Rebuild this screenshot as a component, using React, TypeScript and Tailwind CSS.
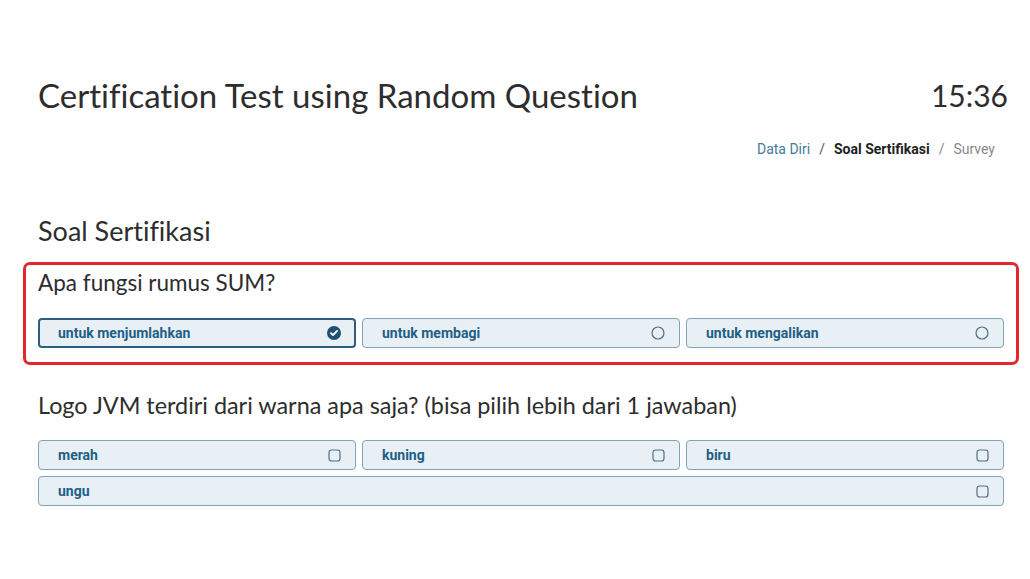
import React from 'react'

type Choice = { label: string; selected?: boolean; full?: boolean }

const q1: Choice[] = [
  { label: 'untuk menjumlahkan', selected: true },
  { label: 'untuk membagi' },
  { label: 'untuk mengalikan' },
]

const q2: Choice[] = [
  { label: 'merah' },
  { label: 'kuning' },
  { label: 'biru' },
  { label: 'ungu', full: true },
]

function RadioIcon({ selected }: { selected?: boolean }) {
  if (selected) {
    return (
      <svg width="14" height="14" viewBox="0 0 14 14">
        <circle cx="7" cy="7" r="7" fill="#1f4f73" />
        <path d="M4 7.2l2 2 4-4.2" fill="none" stroke="#fff" strokeWidth="1.9" strokeLinecap="round" strokeLinejoin="round" />
      </svg>
    )
  }
  return (
    <svg width="14" height="14" viewBox="0 0 14 14">
      <circle cx="7" cy="7" r="6" fill="none" stroke="#4d6f86" strokeWidth="1.2" />
    </svg>
  )
}

function CheckIcon() {
  return (
    <svg width="13" height="13" viewBox="0 0 13 13">
      <rect x="1" y="1" width="11" height="11" rx="2.5" fill="none" stroke="#4d6f86" strokeWidth="1.2" />
    </svg>
  )
}

function Option({ choice, multi }: { choice: Choice; multi?: boolean }) {
  return (
    <button
      className={
        'flex h-[30px] items-center justify-between rounded-[4px] bg-[#e8f0f6] text-[14px] font-bold text-[#1f5f86] ' +
        (choice.selected ? 'border-2 border-[#2d5e82] pl-[18px] pr-[13px]' : 'border border-[#7fa3bb] pl-[19px] pr-[14px]') +
        (choice.full ? ' col-span-3' : '')
      }
    >
      <span>{choice.label}</span>
      {multi ? <CheckIcon /> : <RadioIcon selected={choice.selected} />}
    </button>
  )
}

export default function App() {
  return (
    <div className="min-h-[579px] w-full bg-white pl-[38px] pr-[26px] pt-[74px] font-['Roboto',sans-serif]">
      {/* Header */}
      <div className="flex items-center justify-between font-['Lato',sans-serif] text-[#2d2d2d] [font-variant-ligatures:none]">
        <h1 className="text-[33px] leading-[42px]">Certification Test using Random Question</h1>
        <span className="mr-[-4px] text-[30px] leading-[42px]">15:36</span>
      </div>

      {/* Breadcrumb */}
      <div className="mt-[23px] flex justify-end pr-[9px] text-[14px] leading-[20px]">
        <span className="text-[#3f7aa0]">Data Diri</span>
        <span className="mx-[9px] text-[#555]">/</span>
        <span className="font-bold text-[#222]">Soal Sertifikasi</span>
        <span className="mx-[9px] text-[#888]">/</span>
        <span className="text-[#888]">Survey</span>
      </div>

      <h2 className="mt-[56px] font-['Lato',sans-serif] text-[27px] leading-[32px] text-[#2d2d2d] [font-variant-ligatures:none]">
        Soal Sertifikasi
      </h2>

      {/* Question 1 */}
      <div className="-mx-[15px] mt-[15px] rounded-[7px] border-[3px] border-[#e2282e] px-[12px] pb-[14px] pt-[4px]">
        <p className="font-['Lato',sans-serif] text-[22.5px] leading-[28px] text-[#2d2d2d]">Apa fungsi rumus SUM?</p>
        <div className="mt-[21px] grid grid-cols-3 gap-[6px]">
          {q1.map((c) => (
            <Option key={c.label} choice={c} />
          ))}
        </div>
      </div>

      {/* Question 2 */}
      <p className="mt-[26px] font-['Lato',sans-serif] text-[23.4px] leading-[28px] text-[#2d2d2d]">
        Logo JVM terdiri dari warna apa saja? (bisa pilih lebih dari 1 jawaban)
      </p>
      <div className="mt-[21px] grid grid-cols-3 gap-[6px]">
        {q2.map((c) => (
          <Option key={c.label} choice={c} multi />
        ))}
      </div>
    </div>
  )
}
